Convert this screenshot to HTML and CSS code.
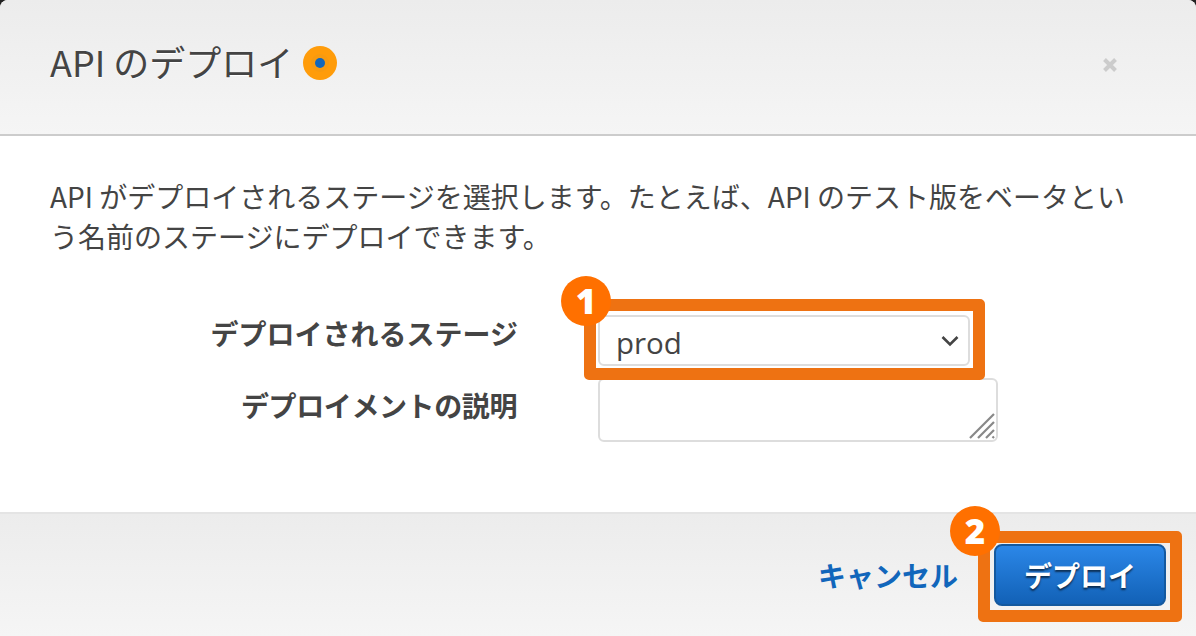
FILE: index.html
```html
<!DOCTYPE html>
<html lang="ja">
<head>
<meta charset="utf-8">
<title>API のデプロイ</title>
<link rel="stylesheet" href="styles.css">
</head>
<body>
<div class="modal">
  <header class="modal-header">
    <h1 class="modal-title">API のデプロイ</h1>
    <span class="info-dot"><span class="info-dot-core"></span></span>
    <svg class="close-icon" width="14" height="14" viewBox="0 0 14 14" aria-hidden="true"><path d="M1.500 1.500L12.500 12.500M12.500 1.500L1.500 12.500" stroke="#ccc" stroke-width="4" fill="none"/></svg>
  </header>
  <main class="modal-body">
    <p class="description">API がデプロイされるステージを選択します。たとえば、API のテスト版をベータという名前のステージにデプロイできます。</p>
    <form class="form">
      <div class="form-row row-stage">
        <label class="form-label">デプロイされるステージ</label>
        <div class="select-wrap">
          <select class="stage-select"><option>prod</option></select>
          <svg class="chevron" width="18" height="12" viewBox="0 0 18 12" aria-hidden="true"><path d="M1.500 2L9 9.500L16.500 2" stroke="#444" stroke-width="2.600" fill="none"/></svg>
        </div>
      </div>
      <div class="form-row">
        <label class="form-label label-desc">デプロイメントの説明</label>
        <div class="textarea-wrap">
          <textarea class="desc-input"></textarea>
          <svg class="grip" width="26" height="26" viewBox="0 0 26 26" aria-hidden="true"><path d="M1 25L25 1M9 25L25 9M17 25L25 17M23.500 25L25 23.500" stroke="#888" stroke-width="2.200" fill="none"/></svg>
        </div>
      </div>
    </form>
    <div class="highlight highlight-select"></div>
    <span class="badge badge-one">1</span>
  </main>
  <footer class="modal-footer">
    <a class="cancel-link">キャンセル</a>
    <button class="deploy-button" type="button">デプロイ</button>
    <div class="highlight highlight-button"></div>
    <span class="badge badge-two">2</span>
  </footer>
</div>
</body>
</html>
```
FILE: styles.css
```css
* { box-sizing: border-box; }
html, body { margin: 0; height: 100%; }
body {
  background: #222;
  overflow: hidden;
  font-family: "Noto Sans CJK JP", "Noto Sans", sans-serif;
  color: #444;
}
.modal {
  position: relative;
  width: 1196px;
  height: 636px;
  border-radius: 8px 8px 0 0;
  overflow: hidden;
  background: #fff;
  display: flex;
  flex-direction: column;
}
.modal-header {
  height: 136px;
  flex: none;
  display: flex;
  align-items: center;
  padding: 0 79px 8px 50px;
  background: linear-gradient(#ececec, #f5f5f5);
  border-bottom: 2px solid #ccc;
}
.modal-title {
  margin: 0;
  padding-bottom: 4px;
  font-size: 36px;
  font-weight: 400;
  line-height: 48px;
  color: #444;
  text-shadow: 0 1px 0 #fff;
}
.info-dot {
  width: 34px;
  height: 34px;
  margin-left: 10px;
  border-radius: 50%;
  background: #ff9c0a;
  display: flex;
  align-items: center;
  justify-content: center;
}
.info-dot-core {
  width: 10px;
  height: 10px;
  border-radius: 50%;
  background: #1166bb;
  box-shadow: 0 0 0 4px #f79a10;
}
.close-icon { margin-left: auto; margin-top: 4px; }
.modal-body {
  position: relative;
  flex: 1;
  padding: 40px 50px 0;
}
.description {
  margin: 0;
  font-size: 28px;
  line-height: 40px;
  color: #444;
}
.form { margin-top: 59px; }
.form-row {
  display: flex;
  align-items: flex-start;
  margin-bottom: 12px;
}
.form-label {
  flex: none;
  width: 468px;
  margin-right: 80px;
  font-size: 28px;
  font-weight: 700;
  line-height: 36px;
  text-align: right;
  color: #444;
}
.label-desc { padding: 9px 1px 0 0; letter-spacing: -0.4px; }
.select-wrap {
  position: relative;
  width: 372px;
  height: 51px;
}
.stage-select {
  appearance: none;
  -webkit-appearance: none;
  display: block;
  width: 100%;
  height: 100%;
  padding: 4px 0 0 16px;
  border: 2px solid #ddd;
  border-radius: 6px;
  background: #fff;
  font-family: "Open Sans", sans-serif;
  font-size: 29.5px;
  color: #444;
}
.chevron {
  position: absolute;
  right: 11px;
  top: 20px;
}
.textarea-wrap {
  position: relative;
  width: 400px;
  height: 64px;
}
.desc-input {
  display: block;
  width: 100%;
  height: 100%;
  border: 2px solid #ddd;
  border-radius: 6px;
  background: #fff;
  resize: none;
  outline: none;
}
.grip {
  position: absolute;
  right: 3px;
  bottom: 3px;
}
.highlight {
  position: absolute;
  border: 12px solid #ee7212;
  border-radius: 5px;
  pointer-events: none;
}
.highlight-select {
  left: 584px;
  top: 163px;
  width: 401px;
  height: 81px;
}
.badge {
  position: absolute;
  width: 50px;
  height: 50px;
  border-radius: 50%;
  background: #ff7000;
  color: #fff;
  font-family: "Open Sans", sans-serif;
  font-size: 35px;
  font-weight: 800;
  line-height: 50px;
  text-align: center;
}
.badge-one { left: 561px; top: 140px; }
.modal-footer {
  position: relative;
  height: 124px;
  flex: none;
  display: flex;
  align-items: center;
  justify-content: flex-end;
  padding: 0 30px 1px 0;
  background: linear-gradient(#ececec, #f5f5f5);
  border-top: 2px solid #e4e4e4;
}
.cancel-link {
  margin-right: 36px;
  font-size: 28px;
  font-weight: 700;
  line-height: 40px;
  color: #1166bb;
}
.deploy-button {
  width: 172px;
  height: 62px;
  border: 2px solid #14599f;
  border-radius: 8px;
  background: linear-gradient(#2b87e8, #1261b6);
  color: #fff;
  font-family: "Noto Sans CJK JP", sans-serif;
  font-size: 28px;
  font-weight: 700;
  line-height: 40px;
  padding: 0;
  text-shadow: 0 2px 2px rgba(0,0,0,.6);
}
.highlight-button {
  left: 978px;
  top: 17px;
  width: 204px;
  height: 91px;
}
.badge-two { left: 950px; top: -8px; }
```
